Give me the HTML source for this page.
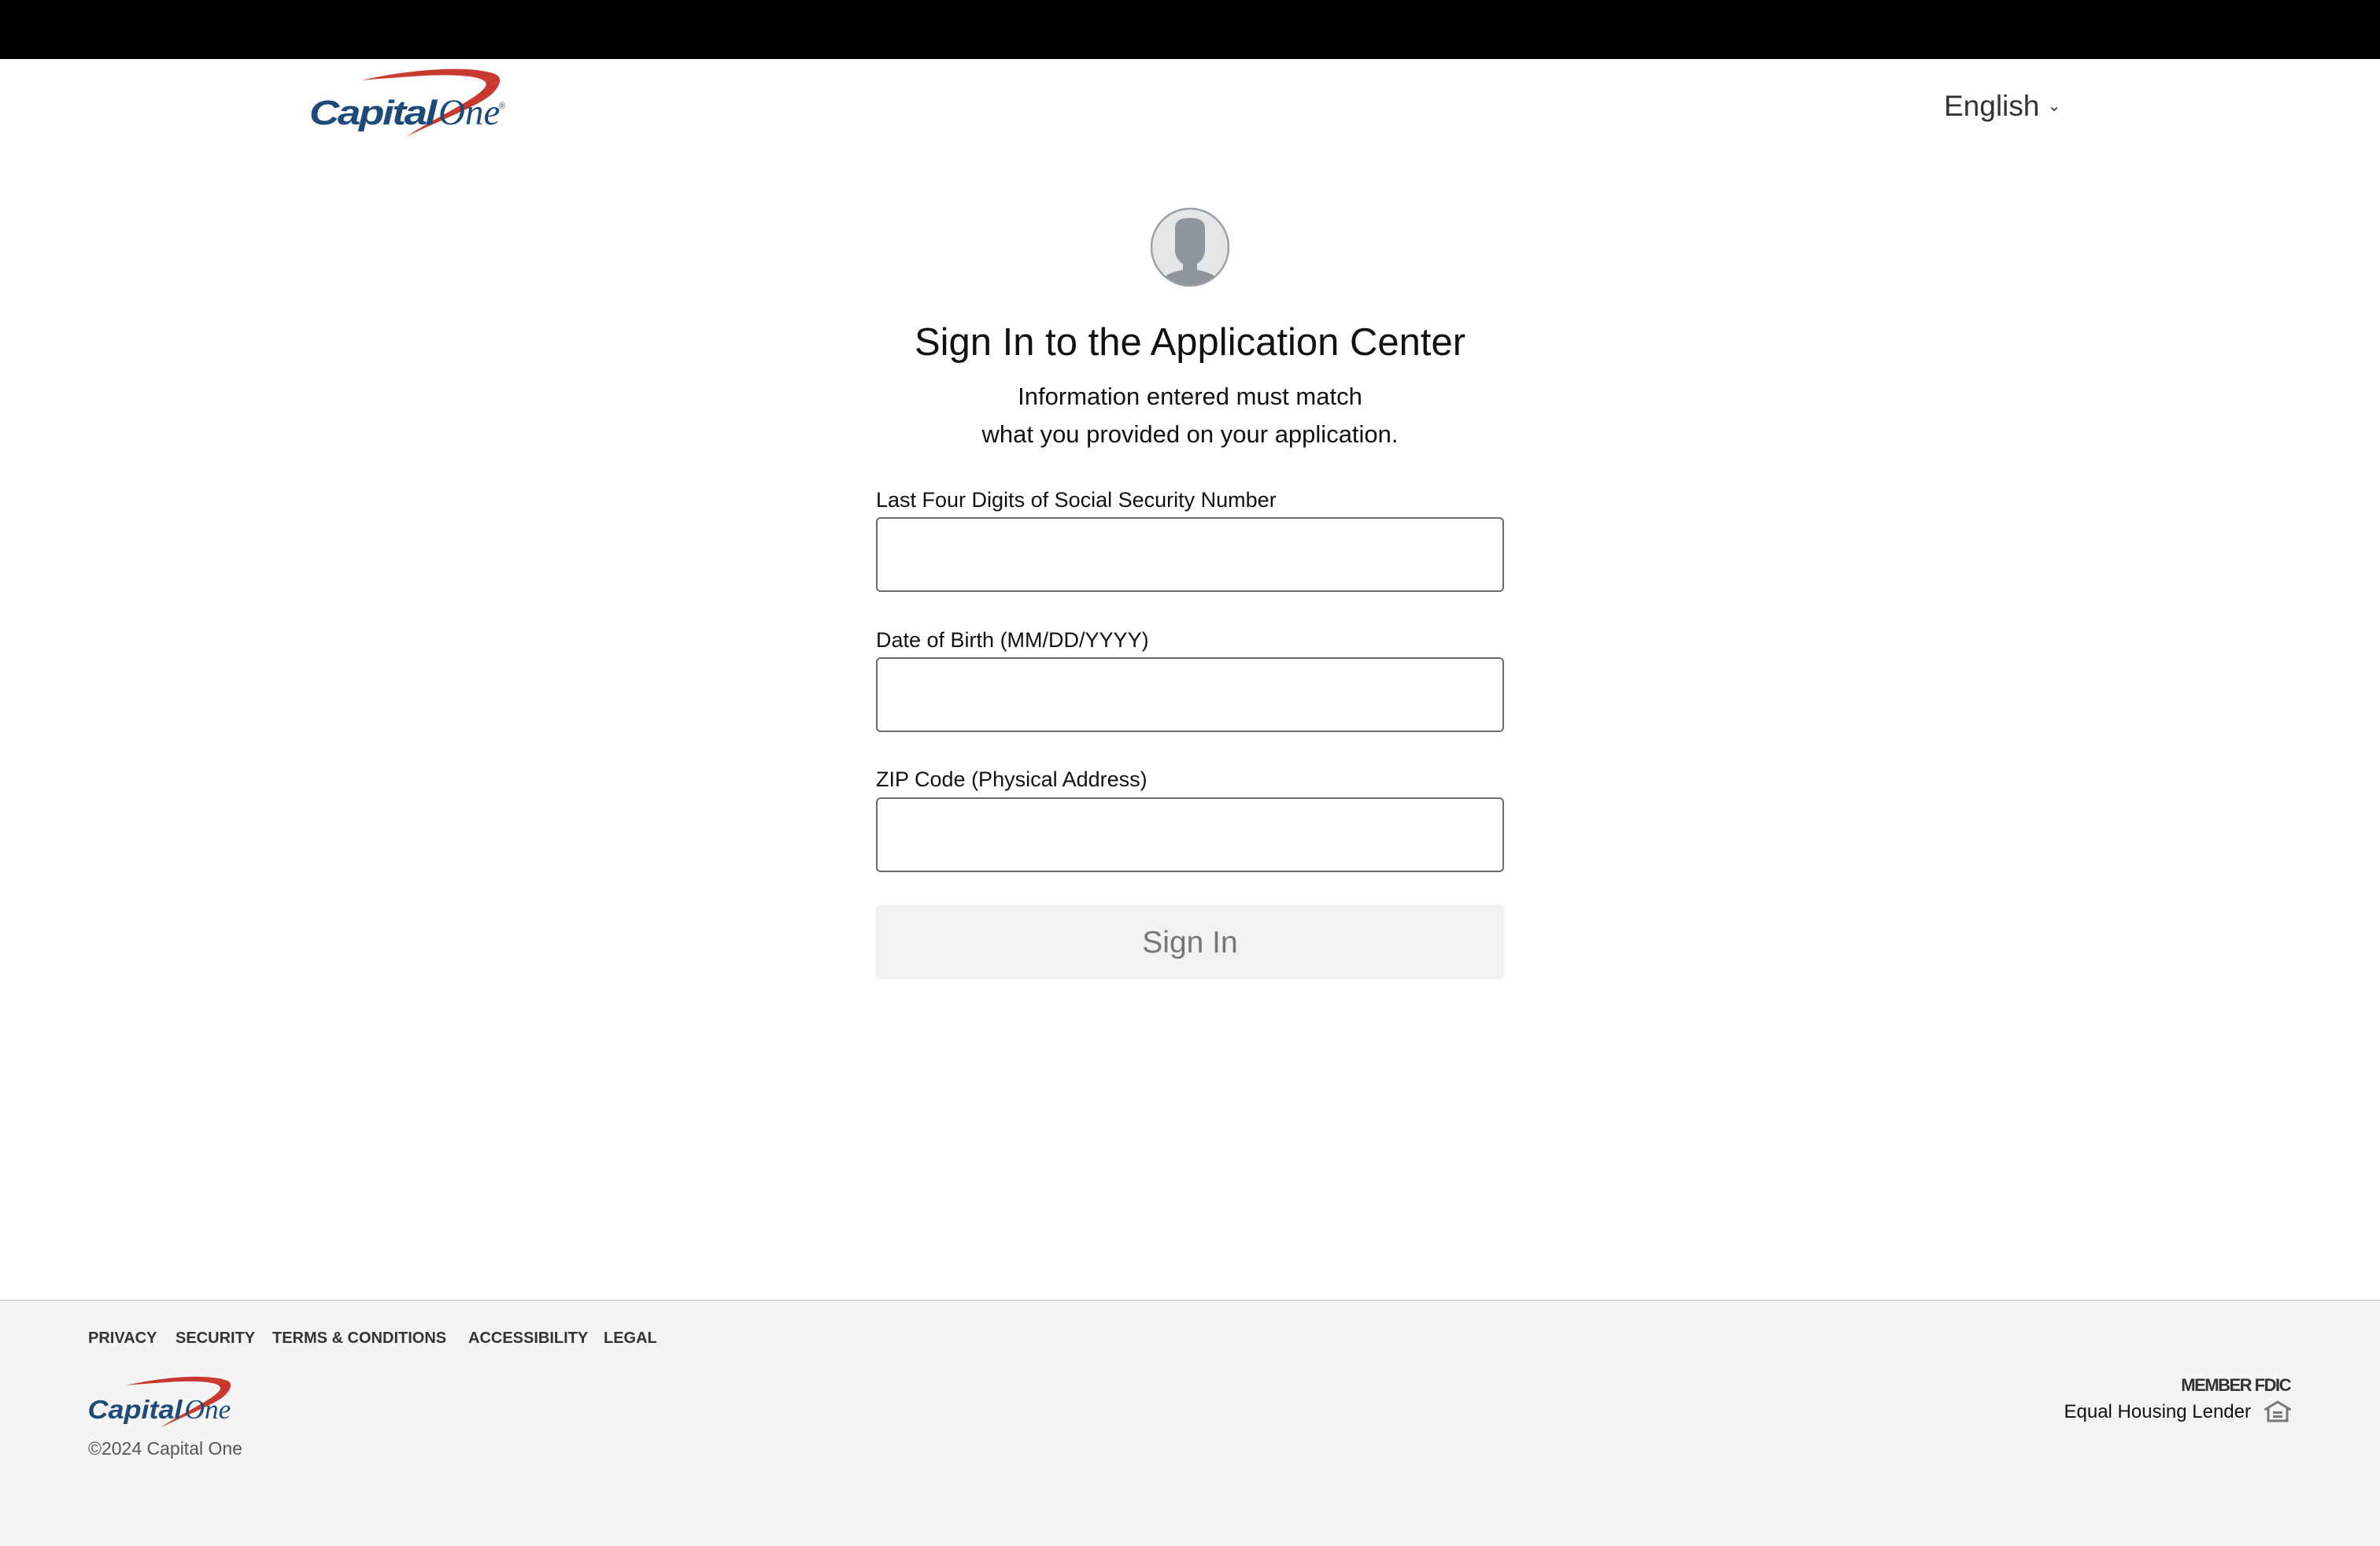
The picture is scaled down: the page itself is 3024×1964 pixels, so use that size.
<!DOCTYPE html>
<html><head><meta charset="utf-8"><style>
*{margin:0;padding:0;box-sizing:border-box}
body{width:3024px;height:1964px;background:#fff;font-family:"Liberation Sans",sans-serif;color:#111;position:relative;overflow:hidden}
.abs{position:absolute}
.top{left:0;top:0;width:3024px;height:75px;background:#000}
.lbl{left:1113px;font-size:27px;color:#111}
.inp{left:1113px;width:798px;height:95px;border:2px solid #6b6b6b;border-radius:6px;background:#fff}
.foot{left:0;top:1651px;width:3024px;height:313px;background:#f4f4f4;border-top:2px solid #d6d6d6}
.fl{top:1689px;font-size:20px;font-weight:bold;color:#333}
</style></head><body>
<div class="abs top"></div>
<svg class="abs" style="left:391px;top:86px" width="256" height="94" viewBox="0 0 256 94">
<path d="M68 16 C130 2 205 -4 238 8 C252 14 240 32 222 42 C200 55 150 75 125 88 C160 64 215 40 225 25 C235 12 200 8 150 10 C120 12 90 14 68 16Z" fill="#c8392f"/>
<text x="2" y="72" font-family="Liberation Sans" font-weight="bold" font-style="italic" font-size="44" fill="#1d4a78" letter-spacing="-2" textLength="160" lengthAdjust="spacingAndGlyphs">Capital</text>
<text x="166" y="72" font-family="Liberation Serif" font-style="italic" font-size="47" fill="#1d4a78">One</text>
<text x="243" y="52" font-size="11" fill="#1d4a78">®</text>
</svg>
<div class="abs" style="left:2470px;top:114px;font-size:37px;color:#333">English <span style="font-size:20px;position:relative;top:-6px">&#8964;</span></div>
<svg class="abs" style="left:1461px;top:263px" width="102" height="102" viewBox="0 0 102 102">
<circle cx="51" cy="51" r="49" fill="#e5e6e8" stroke="#9aa0a6" stroke-width="2.5"/>
<clipPath id="c"><circle cx="51" cy="51" r="48"/></clipPath>
<g clip-path="url(#c)" fill="#8f959c"><path d="M32 28 C32 16 40 14 51 14 C62 14 70 16 70 28 L70 54 C70 64 64 70 60 72 L60 80 C72 82 86 86 92 100 L10 100 C16 86 30 82 42 80 L42 72 C38 70 32 64 32 54Z"/></g>
</svg>
<div class="abs" style="left:0;width:3024px;top:407px;text-align:center;font-size:49px;color:#111">Sign In to the Application Center</div>
<div class="abs" style="left:0;width:3024px;top:480px;text-align:center;font-size:31px;line-height:48px;color:#111">Information entered must match<br>what you provided on your application.</div>
<div class="abs lbl" style="top:620px">Last Four Digits of Social Security Number</div>
<div class="abs inp" style="top:657px"></div>
<div class="abs lbl" style="top:798px">Date of Birth (MM/DD/YYYY)</div>
<div class="abs inp" style="top:835px"></div>
<div class="abs lbl" style="top:975px">ZIP Code (Physical Address)</div>
<div class="abs inp" style="top:1013px"></div>
<div class="abs" style="left:1113px;top:1149px;width:798px;height:95px;background:#f2f2f2;border-radius:6px;text-align:center;line-height:97px;font-size:39px;color:#777">Sign In</div>
<div class="abs foot"></div>
<div class="abs fl" style="left:112px">PRIVACY</div>
<div class="abs fl" style="left:223px">SECURITY</div>
<div class="abs fl" style="left:346px">TERMS &amp; CONDITIONS</div>
<div class="abs fl" style="left:595px">ACCESSIBILITY</div>
<div class="abs fl" style="left:767px">LEGAL</div>
<svg class="abs" style="left:110px;top:1747px" width="192" height="72" viewBox="0 0 256 94">
<path d="M68 16 C130 2 205 -4 238 8 C252 14 240 32 222 42 C200 55 150 75 125 88 C160 64 215 40 225 25 C235 12 200 8 150 10 C120 12 90 14 68 16Z" fill="#c8392f"/>
<text x="2" y="72" font-family="Liberation Sans" font-weight="bold" font-style="italic" font-size="44" fill="#1d4a78" textLength="160" lengthAdjust="spacingAndGlyphs">Capital</text>
<text x="166" y="72" font-family="Liberation Serif" font-style="italic" font-size="47" fill="#1d4a78">One</text>
</svg>
<div class="abs" style="left:112px;top:1827px;font-size:23px;color:#555">©2024 Capital One</div>
<div class="abs" style="right:114px;top:1747px;font-size:22px;font-weight:bold;color:#333;letter-spacing:-1.5px">MEMBER FDIC</div>
<div class="abs" style="right:164px;top:1780px;font-size:24px;color:#111">Equal Housing Lender</div>
<svg class="abs" style="left:2877px;top:1779px" width="34" height="28" viewBox="0 0 34 28"><path d="M17 2 L32 11 L29 11 L29 26 L5 26 L5 11 L2 11Z" fill="none" stroke="#777" stroke-width="3"/><rect x="11" y="14" width="12" height="3" fill="#777"/><rect x="11" y="19" width="12" height="3" fill="#777"/></svg>
</body></html>
